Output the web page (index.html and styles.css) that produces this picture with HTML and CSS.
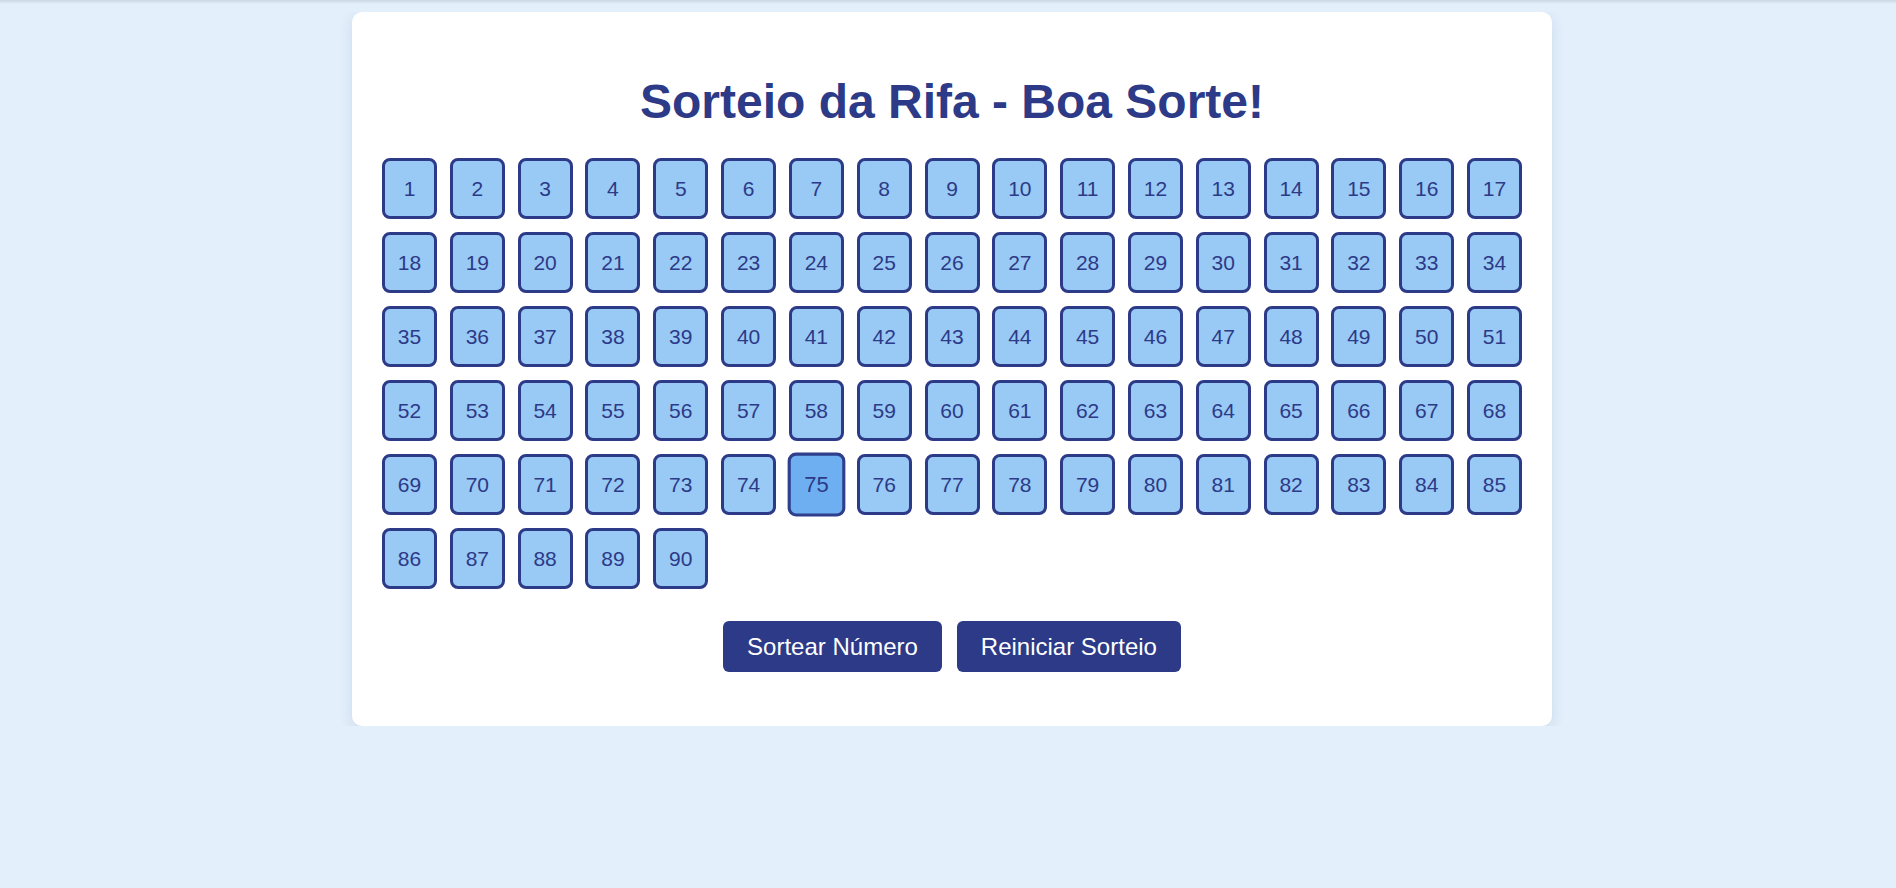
FILE: index.html
```html
<!DOCTYPE html>
<html lang="pt-BR">
<head>
<meta charset="utf-8">
<title>Sorteio da Rifa</title>
<link rel="stylesheet" href="styles.css">
</head>
<body>
<div class="card">
  <h1 class="title">Sorteio da Rifa - Boa Sorte!</h1>
  <div class="grid">
    <div class="num">1</div><div class="num">2</div><div class="num">3</div><div class="num">4</div><div class="num">5</div><div class="num">6</div><div class="num">7</div><div class="num">8</div><div class="num">9</div><div class="num">10</div>
    <div class="num">11</div><div class="num">12</div><div class="num">13</div><div class="num">14</div><div class="num">15</div><div class="num">16</div><div class="num">17</div><div class="num">18</div><div class="num">19</div><div class="num">20</div>
    <div class="num">21</div><div class="num">22</div><div class="num">23</div><div class="num">24</div><div class="num">25</div><div class="num">26</div><div class="num">27</div><div class="num">28</div><div class="num">29</div><div class="num">30</div>
    <div class="num">31</div><div class="num">32</div><div class="num">33</div><div class="num">34</div><div class="num">35</div><div class="num">36</div><div class="num">37</div><div class="num">38</div><div class="num">39</div><div class="num">40</div>
    <div class="num">41</div><div class="num">42</div><div class="num">43</div><div class="num">44</div><div class="num">45</div><div class="num">46</div><div class="num">47</div><div class="num">48</div><div class="num">49</div><div class="num">50</div>
    <div class="num">51</div><div class="num">52</div><div class="num">53</div><div class="num">54</div><div class="num">55</div><div class="num">56</div><div class="num">57</div><div class="num">58</div><div class="num">59</div><div class="num">60</div>
    <div class="num">61</div><div class="num">62</div><div class="num">63</div><div class="num">64</div><div class="num">65</div><div class="num">66</div><div class="num">67</div><div class="num">68</div><div class="num">69</div><div class="num">70</div>
    <div class="num">71</div><div class="num">72</div><div class="num">73</div><div class="num">74</div><div class="num active">75</div><div class="num">76</div><div class="num">77</div><div class="num">78</div><div class="num">79</div><div class="num">80</div>
    <div class="num">81</div><div class="num">82</div><div class="num">83</div><div class="num">84</div><div class="num">85</div><div class="num">86</div><div class="num">87</div><div class="num">88</div><div class="num">89</div><div class="num">90</div>
  </div>
  <div class="actions">
    <button class="btn" type="button">Sortear Número</button>
    <button class="btn" type="button">Reiniciar Sorteio</button>
  </div>
</div>
</body>
</html>
```
FILE: styles.css
```css
html {
  background-color: #e3effb;
  background-image: linear-gradient(to bottom, #cbd6e3 0, #e3effb 4px);
  background-repeat: no-repeat;
  background-size: 100% 4px;
}

body {
  margin: 12px 0 0 8px;
  padding: 0;
  font-family: "Liberation Sans", Arial, sans-serif;
}

.card {
  width: 1200px;
  box-sizing: border-box;
  margin: 0 auto;
  background: #ffffff;
  border-radius: 10px;
  padding: 30px 30px 54px;
  box-shadow: 0 4px 14px rgba(60, 90, 130, 0.14);
}

.title {
  margin: 32px 0 29px;
  text-align: center;
  font-size: 48px;
  font-weight: bold;
  color: #2c3a87;
  line-height: normal;
}

.grid {
  display: grid;
  grid-template-columns: repeat(17, 55px);
  justify-content: space-between;
  row-gap: 13px;
}

.num {
  box-sizing: border-box;
  width: 55px;
  height: 61px;
  border: 3px solid #2c3a87;
  border-radius: 8px;
  background: #99c9f5;
  color: #2c3a87;
  font-size: 21px;
  display: flex;
  align-items: center;
  justify-content: center;
}

.num.active {
  background: #6eaff1;
  transform: scale(1.05);
  border-color: #2f3f8c;
}

.actions {
  display: flex;
  justify-content: center;
  gap: 15px;
  margin-top: 32px;
}

.btn {
  font-family: "Liberation Sans", Arial, sans-serif;
  font-size: 24px;
  line-height: normal;
  padding: 11.5px 24px;
  border: none;
  border-radius: 6px;
  background: #2c3a87;
  color: #ffffff;
}
```
